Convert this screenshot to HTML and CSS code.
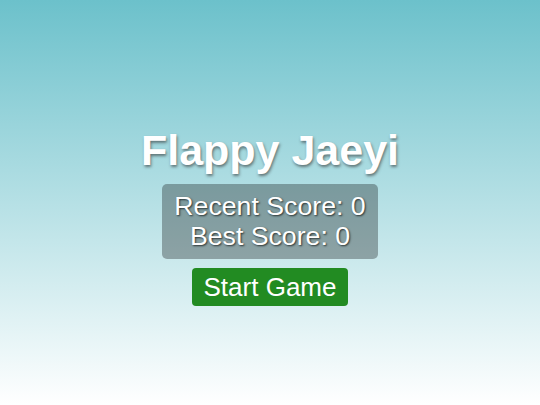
FILE: index.html
```html
<!DOCTYPE html>
<html>
<head>
<meta charset="utf-8">
<link rel="stylesheet" href="styles.css">
</head>
<body>
<main class="screen">
  <h1 class="title">Flappy Jaeyi</h1>
  <div class="scores">
    <div class="score-line">Recent Score: 0</div>
    <div class="score-line">Best Score: 0</div>
  </div>
  <button class="start">Start Game</button>
</main>
</body>
</html>
```
FILE: styles.css
```css
html, body {
  margin: 0;
  padding: 0;
  height: 100%;
}
body {
  background: linear-gradient(to bottom, #6cc1cb 0%, #ffffff 100%);
  font-family: "Liberation Sans", Arial, sans-serif;
}
.screen {
  height: 405px;
  display: flex;
  flex-direction: column;
  align-items: center;
  justify-content: flex-start;
  padding-top: 124px;
  box-sizing: border-box;
}
.title {
  margin: 0;
  font-size: 43px;
  font-weight: bold;
  color: #ffffff;
  line-height: 52px;
  text-shadow: 1px 2px 3px rgba(50, 50, 50, 0.6);
}
.scores {
  margin-top: 8px;
  background: rgba(0, 0, 0, 0.3);
  border-radius: 5px;
  padding: 7px 12px 8px;
  color: #ffffff;
  font-size: 26.7px;
  line-height: 30px;
  text-align: center;
  text-shadow: 1px 1px 2px rgba(0, 0, 0, 0.7);
}
.start {
  margin-top: 9px;
  background: #228b22;
  color: #ffffff;
  border: none;
  border-radius: 4px;
  font-family: "Liberation Sans", Arial, sans-serif;
  font-size: 26px;
  line-height: 30px;
  padding: 4px 12px 4px;
}
```
